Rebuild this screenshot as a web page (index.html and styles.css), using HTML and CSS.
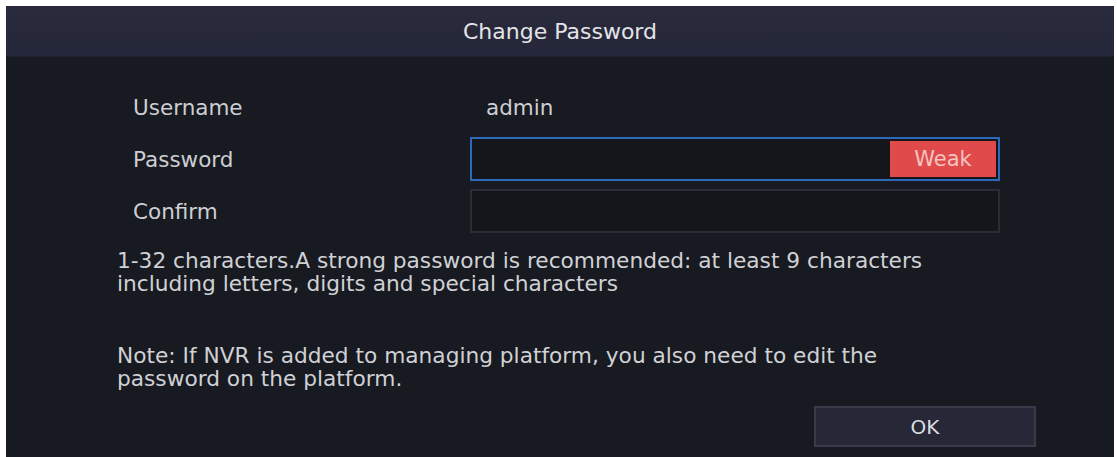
FILE: index.html
```html
<!DOCTYPE html>
<html>
<head>
<meta charset="utf-8">
<link rel="stylesheet" href="styles.css">
</head>
<body>
<div class="dialog">
  <div class="header">Change Password</div>
  <div class="content">
    <div class="form">
      <div class="label">Username</div>
      <div class="value">admin</div>
      <div class="label">Password</div>
      <div class="input focused"><span class="strength">Weak</span></div>
      <div class="label">Confirm</div>
      <div class="input"></div>
    </div>
    <p class="hint">1-32 characters.A strong password is recommended: at least 9 characters<br>including letters, digits and special characters</p>
    <p class="note">Note: If NVR is added to managing platform, you also need to edit the<br>password on the platform.</p>
    <div class="actions"><button class="ok">OK</button></div>
  </div>
</div>
</body>
</html>
```
FILE: styles.css
```css
html, body {
  margin: 0;
  padding: 0;
  background: #ffffff;
}
body {
  padding: 6px 3px 0 6px;
  height: 457px;
  box-sizing: border-box;
  overflow: hidden;
  font-family: "DejaVu Sans", sans-serif;
}
.dialog {
  background: #181a21;
  height: 451px;
  display: flex;
  flex-direction: column;
}
.header {
  height: 51px;
  flex: none;
  background: linear-gradient(#292b3c, #25273a);
  color: #e4e4e8;
  font-size: 22px;
  display: flex;
  align-items: center;
  justify-content: center;
  border-bottom: 1px solid #1e2030;
  box-sizing: border-box;
}
.content {
  padding: 28px 78px 0 111px;
  display: flex;
  flex-direction: column;
}
.form {
  display: grid;
  grid-template-columns: 337px 530px;
  grid-template-rows: 44px 44px 44px;
  row-gap: 8px;
  padding-left: 16px;
}
.label, .value {
  color: #cdced2;
  font-size: 21.5px;
  display: flex;
  align-items: center;
}
.value {
  padding-left: 16px;
}
.input {
  border: 2px solid #2b2d35;
  background: #14161b;
  display: flex;
  justify-content: flex-end;
  align-items: stretch;
  padding: 2px;
}
.input.focused {
  border-color: #2e68b8;
}
.strength {
  width: 106px;
  background: #e14a4a;
  color: #f3c4c2;
  font-size: 21px;
  display: flex;
  align-items: center;
  justify-content: center;
}
.hint, .note {
  margin: 0;
  color: #d0d1d5;
  font-size: 21.7px;
  line-height: 23px;
  white-space: nowrap;
}
.hint {
  margin-top: 16px;
}
.note {
  margin-top: 49px;
}
.actions {
  display: flex;
  justify-content: flex-end;
  margin-top: 16px;
}
.ok {
  width: 222px;
  height: 41px;
  background: #262837;
  border: 2px solid #393b4b;
  color: #dcdde2;
  font-family: "DejaVu Sans", sans-serif;
  font-size: 20px;
  padding: 0;
}
```
